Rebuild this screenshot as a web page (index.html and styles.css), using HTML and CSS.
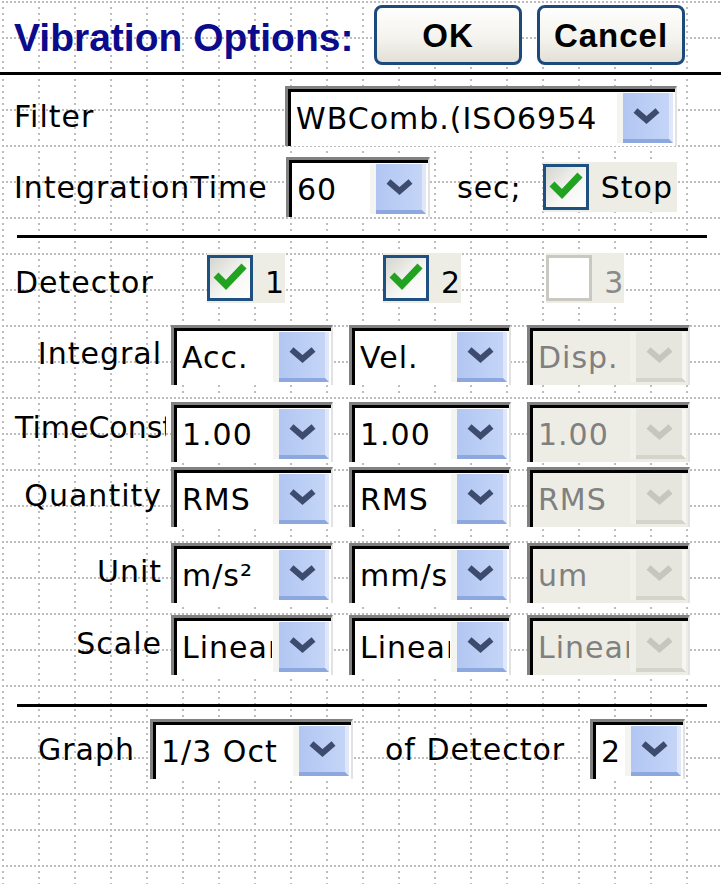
FILE: index.html
```html
<!DOCTYPE html>
<html lang="en">
<head>
<meta charset="utf-8">
<title>Vibration Options</title>
<link rel="stylesheet" href="styles.css">
</head>
<body>
<div class="screen">
  <header class="header">
    <h1 class="title">Vibration Options:</h1>
    <button class="btn btn-ok">OK</button>
    <button class="btn">Cancel</button>
  </header>

  <section class="general">
    <div class="row">
      <span class="lbl lbl-filter">Filter</span>
      <div class="combo combo-filter">
        <span class="combo-text">WBComb.(ISO6954</span>
        <span class="drop"><svg viewBox="0 0 27 16"><polyline points="2.5,2.5 13.5,12 24.5,2.5"/></svg></span>
      </div>
    </div>
    <div class="row">
      <span class="lbl lbl-time">IntegrationTime</span>
      <div class="combo combo-time">
        <span class="combo-text">60</span>
        <span class="drop"><svg viewBox="0 0 27 16"><polyline points="2.5,2.5 13.5,12 24.5,2.5"/></svg></span>
      </div>
      <span class="lbl sec">sec;</span>
      <label class="check check-stop">
        <span class="box"><svg viewBox="0 0 40 40"><polyline points="6,17 16,27 34,8"/></svg></span>
        <span class="check-text">Stop</span>
      </label>
    </div>
  </section>

  <div class="rule"></div>

  <div class="det-row">
    <span class="lbl det-lbl">Detector</span>
    <label class="check">
      <span class="box"><svg viewBox="0 0 40 40"><polyline points="6,17 16,27 34,8"/></svg></span>
      <span class="check-text">1</span>
    </label>
    <label class="check cb2">
      <span class="box"><svg viewBox="0 0 40 40"><polyline points="6,17 16,27 34,8"/></svg></span>
      <span class="check-text">2</span>
    </label>
    <label class="check check-off cb3">
      <span class="box"></span>
      <span class="check-text">3</span>
    </label>
  </div>

  <div class="matrix">
    <span class="mlbl">Integral</span>
    <div class="combo"><span class="combo-text">Acc.</span><span class="drop"><svg viewBox="0 0 27 16"><polyline points="2.5,2.5 13.5,12 24.5,2.5"/></svg></span></div>
    <div class="combo"><span class="combo-text">Vel.</span><span class="drop"><svg viewBox="0 0 27 16"><polyline points="2.5,2.5 13.5,12 24.5,2.5"/></svg></span></div>
    <div class="combo combo-off"><span class="combo-text">Disp.</span><span class="drop"><svg viewBox="0 0 27 16"><polyline points="2.5,2.5 13.5,12 24.5,2.5"/></svg></span></div>

    <span class="mlbl mlbl-clip">TimeConst</span>
    <div class="combo"><span class="combo-text">1.00</span><span class="drop"><svg viewBox="0 0 27 16"><polyline points="2.5,2.5 13.5,12 24.5,2.5"/></svg></span></div>
    <div class="combo"><span class="combo-text">1.00</span><span class="drop"><svg viewBox="0 0 27 16"><polyline points="2.5,2.5 13.5,12 24.5,2.5"/></svg></span></div>
    <div class="combo combo-off"><span class="combo-text">1.00</span><span class="drop"><svg viewBox="0 0 27 16"><polyline points="2.5,2.5 13.5,12 24.5,2.5"/></svg></span></div>

    <span class="mlbl">Quantity</span>
    <div class="combo"><span class="combo-text">RMS</span><span class="drop"><svg viewBox="0 0 27 16"><polyline points="2.5,2.5 13.5,12 24.5,2.5"/></svg></span></div>
    <div class="combo"><span class="combo-text">RMS</span><span class="drop"><svg viewBox="0 0 27 16"><polyline points="2.5,2.5 13.5,12 24.5,2.5"/></svg></span></div>
    <div class="combo combo-off"><span class="combo-text">RMS</span><span class="drop"><svg viewBox="0 0 27 16"><polyline points="2.5,2.5 13.5,12 24.5,2.5"/></svg></span></div>

    <span class="mlbl">Unit</span>
    <div class="combo"><span class="combo-text">m/s²</span><span class="drop"><svg viewBox="0 0 27 16"><polyline points="2.5,2.5 13.5,12 24.5,2.5"/></svg></span></div>
    <div class="combo"><span class="combo-text">mm/s</span><span class="drop"><svg viewBox="0 0 27 16"><polyline points="2.5,2.5 13.5,12 24.5,2.5"/></svg></span></div>
    <div class="combo combo-off"><span class="combo-text">um</span><span class="drop"><svg viewBox="0 0 27 16"><polyline points="2.5,2.5 13.5,12 24.5,2.5"/></svg></span></div>

    <span class="mlbl">Scale</span>
    <div class="combo"><span class="combo-text">Linear</span><span class="drop"><svg viewBox="0 0 27 16"><polyline points="2.5,2.5 13.5,12 24.5,2.5"/></svg></span></div>
    <div class="combo"><span class="combo-text">Linear</span><span class="drop"><svg viewBox="0 0 27 16"><polyline points="2.5,2.5 13.5,12 24.5,2.5"/></svg></span></div>
    <div class="combo combo-off"><span class="combo-text">Linear</span><span class="drop"><svg viewBox="0 0 27 16"><polyline points="2.5,2.5 13.5,12 24.5,2.5"/></svg></span></div>
  </div>

  <div class="rule rule-2"></div>

  <div class="graph-row">
    <span class="lbl g-lbl">Graph</span>
    <div class="combo combo-graph">
      <span class="combo-text">1/3 Oct</span>
      <span class="drop"><svg viewBox="0 0 27 16"><polyline points="2.5,2.5 13.5,12 24.5,2.5"/></svg></span>
    </div>
    <span class="lbl of-lbl">of Detector</span>
    <div class="combo combo-det">
      <span class="combo-text">2</span>
      <span class="drop"><svg viewBox="0 0 27 16"><polyline points="2.5,2.5 13.5,12 24.5,2.5"/></svg></span>
    </div>
  </div>
</div>
</body>
</html>
```

FILE: styles.css
```css
* { box-sizing: border-box; }

html, body { margin: 0; padding: 0; }

body {
  width: 721px;
  height: 884px;
  overflow: hidden;
  background-color: #fff;
  background-image: url("data:image/svg+xml,%3Csvg xmlns='http://www.w3.org/2000/svg' width='36' height='36'%3E%3Cpath fill='%23bdbdbd' d='M0 0h2v2H0zM4 0h2v2H4zM8 0h2v2H8zM12 0h2v2h-2zM16 0h2v2h-2zM20 0h2v2h-2zM24 0h2v2h-2zM28 0h2v2h-2zM32 0h2v2h-2zM0 6h2v2H0zM0 12h2v2H0zM0 18h2v2H0zM0 24h2v2H0zM0 30h2v2H0z'/%3E%3C/svg%3E");
  background-position: 2px 1px;
  background-repeat: repeat;
  font-family: "DejaVu Sans", "Noto Sans", sans-serif;
  font-size: 30px;
  letter-spacing: 1px;
  color: #000;
}

.screen { width: 721px; height: 884px; }

/* ---------- header ---------- */
.header {
  display: flex;
  align-items: flex-start;
  height: 75px;
  border-bottom: 3px solid #000;
  padding: 0 36px 0 14px;
}

.title {
  margin: 16px 0 0;
  font: bold 39px/44px "Liberation Sans", Arial, sans-serif;
  letter-spacing: 0;
  color: #0b0b8c;
  white-space: nowrap;
}

.btn {
  margin-top: 5px;
  width: 148px;
  height: 60px;
  padding: 0;
  border: 3px solid #1d4a7b;
  border-radius: 8px;
  background: linear-gradient(#fefefd, #f4f3ee 55%, #e2e0d6);
  font: bold 33px/1 "Liberation Sans", Arial, sans-serif;
  letter-spacing: 1px;
  color: #000;
  display: flex;
  align-items: center;
  justify-content: center;
}

.btn-ok { margin-left: auto; margin-right: 15px; }

/* ---------- general rows ---------- */
.general {
  padding: 11px 44px 0 14px;
  display: flex;
  flex-direction: column;
  gap: 11px;
}

.row {
  display: flex;
  align-items: center;
  height: 60px;
}

.lbl { white-space: nowrap; }
.lbl-filter { width: 271px; }
.lbl-time { width: 272px; }
.sec { margin-left: 27px; }

.combo-filter { flex: 1; }
.combo-time { width: 144px; }

/* ---------- checkbox ---------- */
.check {
  display: flex;
  align-items: center;
  height: 50px;
  background: #ededE5;
}

.box {
  width: 46px;
  height: 46px;
  flex: none;
  border: 3px solid #1e5182;
  background: linear-gradient(135deg, #d6d6cf, #f7f7f5 60%, #fff);
  display: flex;
}

.box svg {
  width: 40px;
  height: 40px;
  fill: none;
  stroke: #21a221;
  stroke-width: 7;
  stroke-linejoin: miter;
}

.check-text { margin-left: 12px; }

.check-stop { margin-left: auto; padding-right: 4px; }

.check-off .box {
  border-color: #c9c9c1;
  background: #fff;
}
.check-off .check-text { color: #8a8a8a; }

/* ---------- rules ---------- */
.rule {
  height: 3px;
  background: #000;
  margin: 18px 14px 0 17px;
}
.rule-2 { margin-top: 29px; }

/* ---------- detector row ---------- */
.det-row {
  display: flex;
  align-items: center;
  height: 50px;
  margin-top: 15px;
  padding-left: 15px;
}

.det-lbl { width: 192px; padding-top: 8px; }
.det-row .check-text { padding-top: 8px; }
.cb2 { margin-left: 98px; }
.cb3 { margin-left: 85px; }

/* ---------- matrix ---------- */
.matrix {
  display: grid;
  grid-template-columns: 155px 162px 162px 163px;
  grid-template-rows: 77px 65px 76px 72px 60px;
  column-gap: 16px;
  align-items: start;
  margin-top: 22px;
}

.mlbl {
  height: 60px;
  margin-right: -8px;
  display: flex;
  align-items: center;
  justify-content: flex-end;
  padding: 0 1px 4px 0;
  white-space: nowrap;
  overflow: hidden;
}

.mlbl-clip {
  width: 166px;
  margin-right: 0;
  justify-content: flex-start;
  padding: 0 0 10px 15px;
  letter-spacing: 0;
}

/* ---------- combo ---------- */
.combo {
  display: flex;
  align-items: stretch;
  height: 60px;
  background: #fff;
  border-top: 3px solid #818181;
  border-left: 3px solid #818181;
  border-right: 2px solid #e2e2e2;
  box-shadow: inset 3px 3px 0 #000;
  padding: 4px 2px 3px 8px;
}

.combo-text {
  flex: 1;
  min-width: 0;
  align-self: center;
  overflow: hidden;
  white-space: nowrap;
  margin-right: 7px;
}

.drop {
  flex: none;
  width: 50px;
  display: flex;
  align-items: center;
  justify-content: center;
  background: linear-gradient(to right, #b2c6f2, #c4d5f7);
  border-right: 4px solid #dfe7f9;
  border-bottom: 4px solid #8ca8de;
  box-shadow: -6px 0 0 #f4f4f1;
}

.drop svg {
  width: 27px;
  height: 16px;
  fill: none;
  stroke: #3d4c6e;
  stroke-width: 6;
}

.combo-off {
  background: #edede5;
  color: #808080;
}

.combo-off .drop {
  background: #e6e6de;
  border-right-color: #f6f6f2;
  border-bottom-color: #d4d4ca;
  box-shadow: -6px 0 0 #f1f1ec;
}

.combo-off .drop svg { stroke: #c6c6be; }

/* ---------- graph row ---------- */
.graph-row {
  display: flex;
  align-items: center;
  height: 60px;
  margin-top: 12px;
  padding-left: 38px;
}

.g-lbl { width: 112px; }
.combo-graph { width: 203px; }
.of-lbl { margin-left: 32px; width: 205px; }
.combo-det { width: 95px; }
```
